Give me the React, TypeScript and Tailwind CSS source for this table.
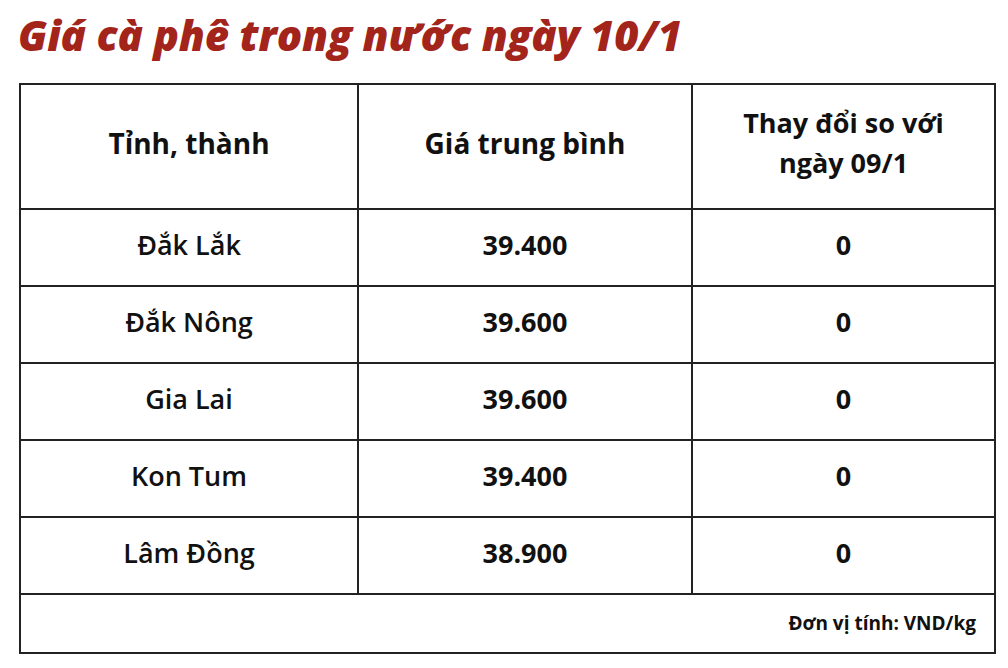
const rows = [
  { province: "Đắk Lắk", price: "39.400", change: "0" },
  { province: "Đắk Nông", price: "39.600", change: "0" },
  { province: "Gia Lai", price: "39.600", change: "0" },
  { province: "Kon Tum", price: "39.400", change: "0" },
  { province: "Lâm Đồng", price: "38.900", change: "0" },
];

export default function App() {
  return (
    <div className="w-[1008px] h-[668px] bg-white font-['Open_Sans','Noto_Sans',sans-serif] text-[#111]">
      <h1 className="pl-[18px] pt-[8px] h-[83px] text-[42px] leading-[54px] font-extrabold italic text-[#a3241a] tracking-[-0.2px]">
        Giá cà phê trong nước ngày 10/1
      </h1>

      <table className="ml-[19px] w-[975px] border-collapse table-fixed">
        <colgroup>
          <col className="w-[338px]" />
          <col className="w-[334px]" />
          <col className="w-[303px]" />
        </colgroup>
        <thead>
          <tr className="h-[125px]">
            <th className="border-2 border-[#222] text-[28px] font-bold leading-[40px] pb-[8px]">Tỉnh, thành</th>
            <th className="border-2 border-[#222] text-[28px] font-bold leading-[40px] pb-[8px]">Giá trung bình</th>
            <th className="border-2 border-[#222] text-[27px] font-bold leading-[40px] px-10 pb-[8px]">
              Thay đổi so với ngày 09/1
            </th>
          </tr>
        </thead>
        <tbody>
          {rows.map((row) => (
            <tr key={row.province} className="h-[77px]">
              <td className="border-2 border-[#222] text-center text-[27px] font-semibold pb-[4px]">{row.province}</td>
              <td className="border-2 border-[#222] text-center text-[27px] font-bold pb-[4px]">{row.price}</td>
              <td className="border-2 border-[#222] text-center text-[27px] font-bold pb-[4px]">{row.change}</td>
            </tr>
          ))}
          <tr className="h-[59px]">
            <td colSpan={3} className="border-2 border-[#222] text-right pr-[18px] text-[19px] font-bold">
              Đơn vị tính: VND/kg
            </td>
          </tr>
        </tbody>
      </table>
    </div>
  );
}
